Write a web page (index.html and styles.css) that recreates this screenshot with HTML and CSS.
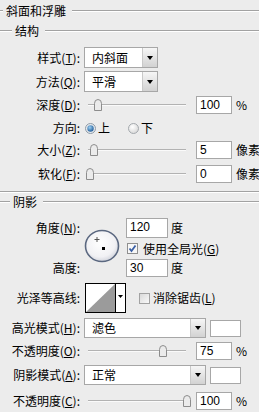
FILE: index.html
```html
<!DOCTYPE html>
<html lang="zh-CN">
<head>
<meta charset="utf-8">
<title>斜面和浮雕</title>
<link rel="stylesheet" href="styles.css">
</head>
<body>
<div class="panel">
  <div class="legend title"><span class="dash d3"></span><span class="ltext">斜面和浮雕</span><span class="rule"></span></div>
  <div class="legend sub"><span class="dash d12"></span><span class="ltext">结构</span><span class="rule"></span></div>

  <div class="row r-sel m7">
    <span class="lbl">样式(<u>T</u>):</span>
    <div class="select w74"><span class="val">内斜面</span><span class="btn"></span></div>
  </div>
  <div class="row r-sel m3">
    <span class="lbl">方法(<u>Q</u>):</span>
    <div class="select w74"><span class="val">平滑</span><span class="btn"></span></div>
  </div>
  <div class="row r-num m4">
    <span class="lbl">深度(<u>D</u>):</span>
    <div class="slider"><span class="track"></span>
      <svg class="thumb" style="left:10px" width="8" height="12" viewBox="0 0 8 12"><path d="M0.5 11.5V4.5Q0.5 0.5 4 0.5Q7.5 0.5 7.5 4.5V11.5Z" fill="#ebebeb" stroke="#8c8c8c"/></svg>
    </div>
    <span class="field">100</span><span class="unit">%</span>
  </div>
  <div class="row r-num m5">
    <span class="lbl">方向:</span>
    <svg class="radio" width="11" height="11" viewBox="0 0 11 11"><defs><radialGradient id="rb" cx="0.4" cy="0.35" r="0.7"><stop offset="0" stop-color="#9cd0f2"/><stop offset="1" stop-color="#1b5796"/></radialGradient></defs><circle cx="5.5" cy="5.5" r="5" fill="#e6eaee" stroke="#8e9aa6"/><circle cx="5.5" cy="5.5" r="3.2" fill="url(#rb)"/></svg>
    <span class="rtext">上</span>
    <svg class="radio r2" width="11" height="11" viewBox="0 0 11 11"><defs><radialGradient id="rg" cx="0.4" cy="0.35" r="0.7"><stop offset="0" stop-color="#ffffff"/><stop offset="1" stop-color="#d6d6d6"/></radialGradient></defs><circle cx="5.5" cy="5.5" r="5" fill="url(#rg)" stroke="#a3a8ad"/></svg>
    <span class="rtext">下</span>
  </div>
  <div class="row r-num m4">
    <span class="lbl">大小(<u>Z</u>):</span>
    <div class="slider"><span class="track"></span>
      <svg class="thumb" style="left:6px" width="8" height="12" viewBox="0 0 8 12"><path d="M0.5 11.5V4.5Q0.5 0.5 4 0.5Q7.5 0.5 7.5 4.5V11.5Z" fill="#ebebeb" stroke="#8c8c8c"/></svg>
    </div>
    <span class="field">5</span><span class="unit">像素</span>
  </div>
  <div class="row r-num m6">
    <span class="lbl">软化(<u>F</u>):</span>
    <div class="slider"><span class="track"></span>
      <svg class="thumb" style="left:2px" width="8" height="12" viewBox="0 0 8 12"><path d="M0.5 11.5V4.5Q0.5 0.5 4 0.5Q7.5 0.5 7.5 4.5V11.5Z" fill="#ebebeb" stroke="#8c8c8c"/></svg>
    </div>
    <span class="field">0</span><span class="unit">像素</span>
  </div>

  <div class="sep"></div>
  <div class="legend sub"><span class="dash d10"></span><span class="ltext">阴影</span><span class="rule"></span></div>

  <div class="angle-grid">
    <span class="lbl g-l1">角度(<u>N</u>):</span>
    <svg class="dial" width="36" height="34" viewBox="0 0 36 34"><defs><radialGradient id="dg" cx="0.45" cy="0.4" r="0.6"><stop offset="0" stop-color="#ffffff"/><stop offset="0.75" stop-color="#f1f1f4"/><stop offset="1" stop-color="#d4d6de"/></radialGradient></defs><ellipse cx="18" cy="17" rx="16.5" ry="15.5" fill="url(#dg)" stroke="#5b6880" stroke-width="1.6"/><path d="M13 8V13M10.5 10.5H15.5" stroke="#555" stroke-width="1"/><rect x="18" y="18" width="3" height="3" fill="#000"/></svg>
    <div class="g-c1"><span class="field f42">120</span><span class="unit">度</span></div>
    <div class="g-c2">
      <svg class="check" width="11" height="11" viewBox="0 0 11 11"><rect x="0.5" y="0.5" width="10" height="10" fill="#f7f7f7" stroke="#8f8f8f"/><path d="M2.5 5.5L4.5 8L8.5 2.5" fill="none" stroke="#3a5fa5" stroke-width="1.8"/></svg>
      <span class="ctext">使用全局光(<u>G</u>)</span>
    </div>
    <span class="lbl g-l3">高度:</span>
    <div class="g-c3"><span class="field f42">30</span><span class="unit">度</span></div>
  </div>

  <div class="row r-contour m6">
    <span class="lbl">光泽等高线:</span>
    <svg class="contour" width="41" height="30" viewBox="0 0 41 30"><rect x="0.5" y="0.5" width="40" height="29" fill="#fff" stroke="#000"/><path d="M1 29L30 1V29Z" fill="#9b9b9b"/><path d="M30.5 1V29" stroke="#000"/><path d="M33 12H38L35.5 15Z" fill="#000"/></svg>
    <svg class="check c2" width="11" height="11" viewBox="0 0 11 11"><defs><linearGradient id="cg" x1="0" y1="0" x2="1" y2="1"><stop offset="0" stop-color="#d8d8d8"/><stop offset="1" stop-color="#fbfbfb"/></linearGradient></defs><rect x="0.5" y="0.5" width="10" height="10" fill="url(#cg)" stroke="#a2a2a2"/></svg>
    <span class="ctext">消除锯齿(<u>L</u>)</span>
  </div>

  <div class="row r-sel2 m5">
    <span class="lbl">高光模式(<u>H</u>):</span>
    <div class="select w122"><span class="val">滤色</span><span class="btn"></span></div>
    <span class="swatch"></span>
  </div>
  <div class="row r-num m4">
    <span class="lbl">不透明度(<u>O</u>):</span>
    <div class="slider"><span class="track"></span>
      <svg class="thumb" style="left:75px" width="8" height="12" viewBox="0 0 8 12"><path d="M0.5 11.5V4.5Q0.5 0.5 4 0.5Q7.5 0.5 7.5 4.5V11.5Z" fill="#ebebeb" stroke="#8c8c8c"/></svg>
    </div>
    <span class="field">75</span><span class="unit">%</span>
  </div>
  <div class="row r-sel2 m5">
    <span class="lbl">阴影模式(<u>A</u>):</span>
    <div class="select w122"><span class="val">正常</span><span class="btn"></span></div>
    <span class="swatch"></span>
  </div>
  <div class="row r-num m7">
    <span class="lbl">不透明度(<u>C</u>):</span>
    <div class="slider"><span class="track"></span>
      <svg class="thumb" style="left:99px" width="8" height="12" viewBox="0 0 8 12"><path d="M0.5 11.5V4.5Q0.5 0.5 4 0.5Q7.5 0.5 7.5 4.5V11.5Z" fill="#ebebeb" stroke="#8c8c8c"/></svg>
    </div>
    <span class="field">100</span><span class="unit">%</span>
  </div>
</div>
</body>
</html>
```

FILE: styles.css
```css
* { box-sizing: border-box; }
html, body { margin: 0; padding: 0; }
body {
  background: #ececec;
  width: 259px;
  height: 412px;
  overflow: hidden;
  font-family: "Noto Sans CJK SC", sans-serif;
  font-size: 12px;
  line-height: 14px;
  color: #000;
}
u { text-decoration: underline; text-underline-offset: 1px; }

.legend { display: flex; align-items: center; }
.title { height: 22px; }
.sub { height: 18px; }
.dash, .rule {
  height: 2px;
  border-top: 1px solid #a2a2a2;
  border-bottom: 1px solid #ffffff;
}
.d3 { width: 3px; }
.d10 { width: 10px; }
.d12 { width: 12px; }
.rule { flex: 1; }
.ltext { margin: 0 6px 0 3px; white-space: nowrap; }
.title .ltext { margin-right: 6px; }

.row { display: flex; align-items: center; }
.m3 { margin-top: 3px; }
.m4 { margin-top: 4px; }
.m5 { margin-top: 5px; }
.m6 { margin-top: 6px; }
.m7 { margin-top: 7px; }
.r-sel { height: 21px; }
.r-sel2 { height: 20px; }
.r-num { height: 18px; }
.r-contour { height: 30px; }

.lbl {
  width: 80px;
  flex: none;
  text-align: right;
  white-space: nowrap;
  margin-right: 4px;
}

.select {
  display: flex;
  height: 100%;
  border: 1px solid #a7a7a7;
  background: #fff;
  flex: none;
}
.w74 { width: 74px; }
.w122 { width: 122px; }
.select .val {
  flex: 1;
  padding-left: 7px;
  display: flex;
  align-items: center;
}
.select .btn {
  width: 15px;
  border-left: 1px solid #c9c9c9;
  background: linear-gradient(#f6f6f6, #d2d2d2);
  display: flex;
  align-items: center;
  justify-content: center;
}
.select .btn::after {
  content: "";
  border-left: 3px solid transparent;
  border-right: 3px solid transparent;
  border-top: 4px solid #000;
}

.slider {
  position: relative;
  width: 108px;
  height: 18px;
  flex: none;
  display: flex;
  align-items: center;
  padding: 0 6px 0 4px;
  margin-right: 4px;
}
.track {
  flex: 1;
  height: 2px;
  border-top: 1px solid #b2b2b2;
  border-bottom: 1px solid #fafafa;
}
.thumb { position: absolute; top: 3px; }

.field {
  width: 36px;
  height: 18px;
  flex: none;
  border: 1px solid #a7a7a7;
  background: #fff;
  font-family: "Liberation Sans", Arial, sans-serif;
  font-size: 12px;
  line-height: 16px;
  padding-left: 3px;
  margin-right: 4px;
}
.f42 { width: 42px; height: 19px; line-height: 17px; margin-right: 3px; }
.unit { white-space: nowrap; }

.radio { flex: none; margin-left: 1px; }
.radio.r2 { margin-left: 18px; }
.rtext { margin-left: 2px; }

.sep {
  margin-top: 8px;
  height: 2px;
  border-top: 1px solid #a2a2a2;
  border-bottom: 1px solid #fff;
}

.angle-grid {
  display: grid;
  grid-template-columns: 80px 38px auto;
  grid-template-rows: 20px 17px 18px;
  column-gap: 4px;
  row-gap: 2px;
  margin-top: 7px;
  align-items: center;
}
.angle-grid .lbl { margin-right: 0; }
.g-l1 { grid-column: 1; grid-row: 1; }
.g-l3 { grid-column: 1; grid-row: 3; }
.dial { grid-column: 2; grid-row: 1 / 4; align-self: start; margin-top: 11px; }
.g-c1, .g-c2, .g-c3 { grid-column: 3; display: flex; align-items: center; height: 100%; }
.g-c1 { grid-row: 1; }
.g-c2 { grid-row: 2; padding-left: 1px; }
.g-c3 { grid-row: 3; }
.g-c1 .field, .g-c3 .field { height: 100%; }

.check { flex: none; }
.ctext { margin-left: 5px; white-space: nowrap; }
.contour { flex: none; margin-left: 1px; }
.check.c2 { margin-left: 13px; }
.r-contour .ctext { margin-left: 3px; }

.swatch {
  width: 31px;
  height: 17px;
  margin-left: 4px;
  border: 1px solid #a7a7a7;
  background: #fff;
  flex: none;
}
```
